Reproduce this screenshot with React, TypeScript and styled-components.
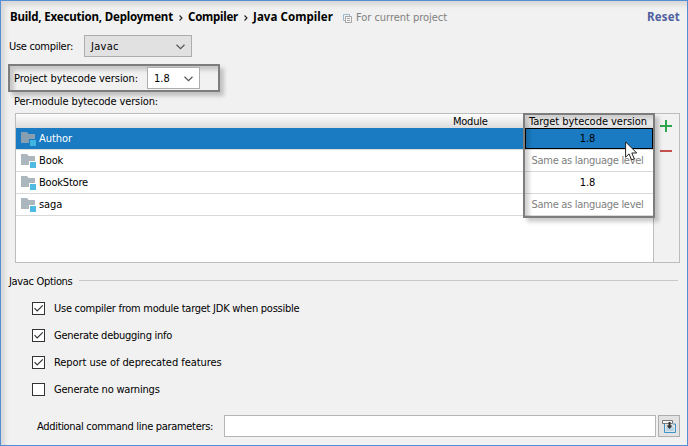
import React from "react";
import styled, { createGlobalStyle } from "styled-components";

const GlobalStyle = createGlobalStyle`
  * { box-sizing: border-box; }
  body { margin: 0; overflow: hidden; }
`;

const Panel = styled.main`
  width: 688px;
  height: 446px;
  padding: 7px 7px 0 8px;
  border: 1px solid #558fd3;
  background: #f1f1f1;
  box-shadow: inset 4px 4px 5px rgba(0, 0, 0, 0.11);
  font: 11px/16px "DejaVu Sans Condensed", "DejaVu Sans", sans-serif;
  font-stretch: condensed;
  color: #000;
  display: flex;
  flex-direction: column;
`;

const Text = styled.span<{ $track?: number; $muted?: boolean }>`
  letter-spacing: ${(p) => p.$track ?? 0}px;
  white-space: pre;
  ${(p) => p.$muted && "color: #808080;"}
`;

const Header = styled.header`
  height: 18px;
  display: flex;
  align-items: center;
  padding-left: 1px;
`;

const Crumb = styled.span<{ $track: number; $width: number }>`
  width: ${(p) => p.$width}px;
  font: bold 11.5px/18px "Noto Sans", sans-serif;
  letter-spacing: ${(p) => p.$track}px;
  white-space: pre;
`;

const CrumbArrow = styled.svg`
  width: 6px;
  height: 8px;
  margin: 1px 4px 0 5px;
`;

const Scope = styled.div`
  display: flex;
  align-items: center;
  gap: 4px;
  margin-left: 10px;
  padding-top: 2px;
`;

const Reset = styled(Crumb)`
  margin-left: auto;
  color: #4f5f9f;
`;

const CompilerRow = styled.div`
  display: flex;
  align-items: center;
  height: 22px;
  margin-top: 9px;
`;

const CompilerLabel = styled.label`
  width: 75px;
  padding-top: 2px;
`;

const Combo = styled.button<{ $width: number; $light?: boolean }>`
  width: ${(p) => p.$width}px;
  height: 22px;
  padding: 1px 6px 0;
  display: flex;
  align-items: center;
  justify-content: space-between;
  border: 1px solid #adadad;
  background: ${(p) => (p.$light ? "#fff" : "#e1e1e1")};
  font: inherit;
  color: inherit;
`;

const Callout = styled.div`
  border: 2px solid #7d7d7d;
  box-shadow: 4px 4px 4px rgba(0, 0, 0, 0.2), inset 4px 4px 4px rgba(0, 0, 0, 0.18);
`;

const ProjectCallout = styled(Callout)`
  width: 212px;
  height: 28px;
  margin: 7px 0 0 -1px;
  padding-left: 4px;
  display: flex;
  align-items: center;
`;

const ProjectLabel = styled.label`
  width: 133px;
  padding-top: 2px;
`;

const ModuleCaption = styled.div`
  height: 21px;
  padding: 2px 0 0 5px;
`;

const TableArea = styled.section`
  width: 665px;
  height: 150px;
  margin-left: 6px;
  border: 1px solid #bdbdbd;
  display: flex;
  position: relative;
`;

const Table = styled.div`
  width: 638px;
  border-right: 1px solid #bdbdbd;
  background: #fff;
`;

const TableHead = styled.div`
  height: 14px;
  display: grid;
  grid-template-columns: 509px 128px;
  background: linear-gradient(#fff, #dcdcdc);
  line-height: 16px;
`;

const ModuleHead = styled.div`
  padding-left: 437px;
`;

const TargetHead = styled.div`
  padding-right: 2px;
  text-align: center;
`;

const Row = styled.div<{ $selected?: boolean }>`
  height: 22px;
  display: grid;
  grid-template-columns: 509px 128px;
  border-bottom: 1px solid #d9d9d9;
  background: ${(p) => (p.$selected ? "#1a7bc2" : "#fff")};
  background-clip: padding-box;
`;

const ModuleCell = styled.div<{ $selected?: boolean }>`
  display: flex;
  align-items: center;
  gap: 3px;
  padding-left: 5px;
  color: ${(p) => (p.$selected ? "#fff" : "#000")};
`;

const TargetCell = styled.div<{ $selected?: boolean }>`
  display: flex;
  align-items: center;
  justify-content: center;
  padding-right: 3px;
  border: ${(p) => (p.$selected ? "1px solid #000" : "0")};
`;

const Tools = styled.div`
  flex: 1;
  display: flex;
  flex-direction: column;
  align-items: center;
  gap: 18px;
  padding: 6px 1px 0 0;
`;

const TargetCallout = styled(Callout)`
  position: absolute;
  left: 507px;
  top: -1px;
  width: 132px;
  height: 105px;
`;

const Pointer = styled.svg`
  position: absolute;
  left: 609px;
  top: 27px;
  width: 13px;
  height: 20px;
`;

const GroupTitle = styled.h2`
  height: 16px;
  margin: 10px 0 0;
  display: flex;
  align-items: center;
  font: inherit;
`;

const TitleText = styled(Text)`
  width: 70px;
  padding-top: 2px;
`;

const Rule = styled.i`
  width: 599px;
  height: 1px;
  margin-top: -1px;
  background: #c9c9c9;
`;

const Options = styled.div`
  display: flex;
  flex-direction: column;
  gap: 11px;
  margin: 11px 0 0 23px;
`;

const Option = styled.label`
  height: 16px;
  display: flex;
  align-items: center;
  gap: 9px;
`;

const OptionText = styled(Text)`
  padding-top: 2px;
`;

const Box = styled.span`
  width: 13px;
  height: 13px;
  display: flex;
  border: 1px solid #333;
  background: #fff;
`;

const ParamsRow = styled.div`
  height: 22px;
  display: flex;
  align-items: center;
  margin-top: 18px;
  padding-left: 28px;
`;

const ParamsLabel = styled.label`
  width: 187px;
  padding-top: 2px;
`;

const Field = styled.input`
  width: 432px;
  height: 22px;
  border: 1px solid #b5b5b5;
  background: #fff;
`;

const ExpandButton = styled.button`
  width: 22px;
  height: 22px;
  margin-left: 2px;
  padding: 0;
  display: flex;
  align-items: center;
  justify-content: center;
  border: 1px solid #adadad;
  background: #e3e3e3;
`;

const Arrow = () => (
  <CrumbArrow viewBox="0 0 6 8">
    <path d="M1.5 1.5 4 4 1.5 6.5" fill="none" stroke="#222" strokeWidth="1.1" />
  </CrumbArrow>
);

const Chevron = () => (
  <svg width="9" height="6" viewBox="0 0 9 6">
    <path d="M.5.8 4.5 4.7 8.5.8" fill="none" stroke="#555" strokeWidth="1.2" />
  </svg>
);

const CopyIcon = () => (
  <svg width="9" height="9" viewBox="0 0 9 9" fill="none">
    <path d="M2 6.5H.5v-6h6V2" stroke="#9ab8cc" />
    <path d="M2.5 2.5h6v6h-6z" fill="#f8f8f8" stroke="#a5a5a5" />
    <path d="M4 4.5h3M4 6.5h3" stroke="#a5a5a5" />
  </svg>
);

const FolderIcon = ({ selected }: { selected?: boolean }) => (
  <svg width="15" height="14" viewBox="0 0 15 14">
    <path d="M0 0h6l1.5 2H14v5H8v4H0z" fill={selected ? "#879fb1" : "#abb6bd"} />
    <path d="M9 8h6v6H9z" fill={selected ? "#42b4e0" : "#50bbe2"} />
  </svg>
);

const modules = [
  { name: "Author", track: -0.05, target: "1.8", selected: true },
  { name: "Book", track: -0.1, target: "" },
  { name: "BookStore", track: -0.195, target: "1.8" },
  { name: "saga", track: -0.1, target: "" },
];

const options = [
  { label: "Use compiler from module target JDK when possible", track: -0.26, on: true },
  { label: "Generate debugging info", track: -0.25, on: true },
  { label: "Report use of deprecated features", track: -0.06, on: true },
  { label: "Generate no warnings", track: -0.2, on: false },
];

export default function App() {
  return (
    <Panel>
      <GlobalStyle />
      <Header>
        <Crumb $track={-0.183} $width={163}>Build, Execution, Deployment</Crumb>
        <Arrow />
        <Crumb $track={-0.24} $width={50}>Compiler</Crumb>
        <Arrow />
        <Crumb $track={0.07} $width={80}>Java Compiler</Crumb>
        <Scope>
          <CopyIcon />
          <Text $track={-0.035} $muted>For current project</Text>
        </Scope>
        <Reset $track={0.19} $width={33}>Reset</Reset>
      </Header>

      <CompilerRow>
        <CompilerLabel><Text $track={-0.294}>Use compiler:</Text></CompilerLabel>
        <Combo $width={108}>
          <Text $track={0.3}>Javac</Text>
          <Chevron />
        </Combo>
      </CompilerRow>

      <ProjectCallout>
        <ProjectLabel><Text $track={-0.064}>Project bytecode version:</Text></ProjectLabel>
        <Combo $width={53} $light>
          <Text>1.8</Text>
          <Chevron />
        </Combo>
      </ProjectCallout>
      <ModuleCaption><Text $track={-0.124}>Per-module bytecode version:</Text></ModuleCaption>

      <TableArea>
        <Table>
          <TableHead>
            <ModuleHead><Text $track={-0.25}>Module</Text></ModuleHead>
            <TargetHead><Text $track={-0.04}>Target bytecode version</Text></TargetHead>
          </TableHead>
          {modules.map((m) => (
            <Row key={m.name} $selected={m.selected}>
              <ModuleCell $selected={m.selected}>
                <FolderIcon selected={m.selected} />
                <Text $track={m.track}>{m.name}</Text>
              </ModuleCell>
              <TargetCell $selected={m.selected}>
                {m.target ? <Text>{m.target}</Text> : <Text $track={-0.29} $muted>Same as language level</Text>}
              </TargetCell>
            </Row>
          ))}
        </Table>
        <Tools>
          <svg width="12" height="12" viewBox="0 0 12 12">
            <path d="M6 0v12M0 6h12" stroke="#2da44e" strokeWidth="2" />
          </svg>
          <svg width="12" height="2" viewBox="0 0 12 2">
            <path d="M0 1h12" stroke="#c4504b" strokeWidth="2" />
          </svg>
        </Tools>
        <TargetCallout />
        <Pointer viewBox="0 0 13 20">
          <path d="M.6.9v15.3l3.5-3.3 2.5 6 2.7-1.1-2.5-5.8h4.9z" fill="#fff" stroke="#222" strokeWidth="1" />
        </Pointer>
      </TableArea>

      <GroupTitle>
        <TitleText $track={-0.33}>Javac Options</TitleText>
        <Rule />
      </GroupTitle>
      <Options>
        {options.map((o) => (
          <Option key={o.label}>
            <Box>
              {o.on && (
                <svg width="11" height="11" viewBox="0 0 11 11">
                  <path d="M1.5 5.2 4.2 8 9.8 2.3" fill="none" stroke="#333" strokeWidth="1.2" />
                </svg>
              )}
            </Box>
            <OptionText $track={o.track}>{o.label}</OptionText>
          </Option>
        ))}
      </Options>
      <ParamsRow>
        <ParamsLabel><Text $track={-0.316}>Additional command line parameters:</Text></ParamsLabel>
        <Field />
        <ExpandButton>
          <svg width="15" height="15" viewBox="0 0 15 15" fill="none">
            <path d="M2.5 5v8.5h11V5H11" stroke="#3c95c8" />
            <path d="M4 8h8v4H4z" fill="#b5d5e6" />
            <path d="M.5 1.5h10v3H.5z" fill="#f4f4f4" stroke="#777" />
            <path d="M7.5 3v5" stroke="#333" strokeWidth="2" />
            <path d="M4.5 6.5h6L7.5 10z" fill="#333" />
          </svg>
        </ExpandButton>
      </ParamsRow>
    </Panel>
  );
}
